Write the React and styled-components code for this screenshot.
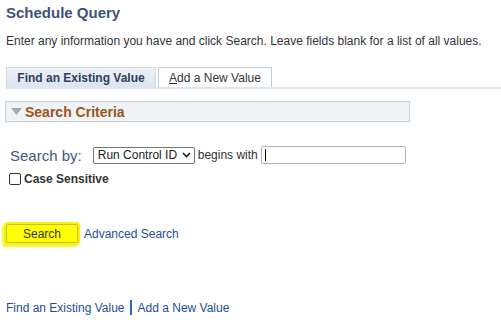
import React from "react";
import styled, { createGlobalStyle } from "styled-components";

const Global = createGlobalStyle`
  html, body { margin: 0; padding: 0; background: #fff; }
  body { font-family: Arial, "Liberation Sans", sans-serif; color: #333; }
`;

const Page = styled.div`
  width: 501px;
  height: 320px;
  overflow: hidden;
  padding: 4px 0 0 6px;
  box-sizing: border-box;
  display: flex;
  flex-direction: column;
`;

const Title = styled.h1`
  margin: 0;
  font-size: 15px;
  line-height: 18px;
  font-weight: bold;
  color: #3d5377;
`;

const Intro = styled.p`
  margin: 12px 0 0;
  font-size: 12px;
  line-height: 14px;
  color: #333;
  white-space: nowrap;
`;

const TabStrip = styled.div`
  margin-top: 19px;
  display: flex;
  align-items: flex-end;
  gap: 2px;
  border-bottom: 2px solid #dde5f0;
  height: 20px;
`;

const Tab = styled.div`
  height: 20px;
  box-sizing: border-box;
  display: flex;
  align-items: center;
  justify-content: center;
  white-space: nowrap;
  font-size: 12px;
  border: 1px solid ${(p) => (p.$active ? "#d3dbe6" : "#c4cbd5")};
  border-bottom: none;
  color: ${(p) => (p.$active ? "#2f3f58" : "#333")};
  font-weight: ${(p) => (p.$active ? "bold" : "normal")};
  background: ${(p) =>
    p.$active ? "linear-gradient(#eef2f8, #dbe4ef)" : "#fff"};
  width: ${(p) => p.$w}px;
  u { text-decoration: underline; }
`;

const Criteria = styled.div`
  margin-top: 12px;
  margin-left: -1px;
  width: 405px;
  height: 21px;
  box-sizing: border-box;
  background: #f0f3f6;
  border: 1px solid #c9cfd7;
  display: flex;
  align-items: center;
  padding-left: 5px;
  gap: 3px;
  font-size: 14px;
  font-weight: bold;
  color: #9a5420;
`;

const SearchRow = styled.div`
  margin-top: 24px;
  margin-left: 4px;
  display: flex;
  align-items: center;
  height: 18px;
`;

const SearchBy = styled.span`
  font-size: 15px;
  color: #41597c;
  margin-right: 11px;
`;

const Select = styled.div`
  width: 102px;
  height: 17px;
  box-sizing: border-box;
  border: 1px solid #767676;
  border-radius: 2px;
  display: flex;
  align-items: center;
  justify-content: space-between;
  padding: 0 3px 0 4px;
  font-size: 12px;
  color: #222;
`;

const Begins = styled.span`
  font-size: 12px;
  color: #333;
  margin: 0 3px 0 3px;
`;

const TextBox = styled.div`
  width: 145px;
  height: 18px;
  box-sizing: border-box;
  border: 1px solid #b5b5b5;
  border-radius: 2px;
  display: flex;
  align-items: center;
  padding-left: 3px;
`;

const Caret = styled.span`
  width: 1px;
  height: 12px;
  background: #000;
`;

const CheckRow = styled.label`
  margin-top: 8px;
  margin-left: 3px;
  display: flex;
  align-items: center;
  gap: 3px;
  font-size: 12px;
  font-weight: bold;
  color: #333;
`;

const Box = styled.span`
  width: 12px;
  height: 12px;
  box-sizing: border-box;
  border: 1px solid #333;
  border-radius: 2px;
  background: #fff;
`;

const ButtonRow = styled.div`
  margin-top: 38px;
  display: flex;
  align-items: center;
  gap: 6px;
`;

const SearchButton = styled.div`
  width: 72px;
  height: 19px;
  box-sizing: border-box;
  background: #ffff00;
  border: 1px solid #c9b85a;
  border-radius: 2px;
  box-shadow: 0 0 0 2px #f5f500, -2px 2px 2px 2px #f3f33a;
  display: flex;
  align-items: center;
  justify-content: center;
  font-size: 12px;
  color: #333;
`;

const Link = styled.a`
  font-size: 12px;
  color: #1d4f92;
  text-decoration: none;
`;

const Footer = styled.div`
  margin-top: 57px;
  display: flex;
  align-items: center;
  font-size: 12px;
`;

const Sep = styled.span`
  width: 2px;
  height: 15px;
  background: #2d6cb5;
  margin: 0 6px 0 5px;
`;

export default function App() {
  return (
    <>
      <Global />
      <Page>
        <Title>Schedule Query</Title>
        <Intro>
          Enter any information you have and click Search. Leave fields blank
          for a list of all values.
        </Intro>
        <TabStrip>
          <Tab $active $w={150}>Find an Existing Value</Tab>
          <Tab $w={114}>
            <span>
              <u>A</u>dd a New Value
            </span>
          </Tab>
        </TabStrip>
        <Criteria>
          <svg width="11" height="7" viewBox="0 0 11 7">
            <path d="M0 0 H11 L5.5 7 Z" fill="#a9a9a9" />
          </svg>
          Search Criteria
        </Criteria>
        <SearchRow>
          <SearchBy>Search by:</SearchBy>
          <Select>
            <span>Run Control ID</span>
            <svg width="9" height="6" viewBox="0 0 9 6">
              <path
                d="M1 1 L4.5 4.5 L8 1"
                fill="none"
                stroke="#222"
                strokeWidth="1.6"
              />
            </svg>
          </Select>
          <Begins>begins with</Begins>
          <TextBox>
            <Caret />
          </TextBox>
        </SearchRow>
        <CheckRow>
          <Box />
          Case Sensitive
        </CheckRow>
        <ButtonRow>
          <SearchButton>Search</SearchButton>
          <Link>Advanced Search</Link>
        </ButtonRow>
        <Footer>
          <Link>Find an Existing Value</Link>
          <Sep />
          <Link>Add a New Value</Link>
        </Footer>
      </Page>
    </>
  );
}
